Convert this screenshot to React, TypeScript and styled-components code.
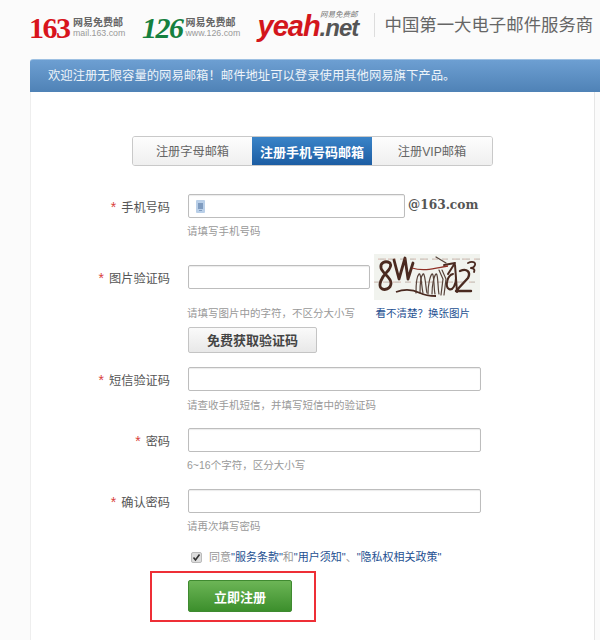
import styled, { createGlobalStyle } from 'styled-components';

const GlobalStyle = createGlobalStyle`
  html, body {
    margin: 0;
    padding: 0;
    background: #fbfbfb;
    font-family: "Liberation Sans", "Noto Sans CJK SC", sans-serif;
  }
`;

const Page = styled.div`
  width: 600px;
  height: 640px;
  overflow: hidden;
`;

const Header = styled.header`
  display: flex;
  align-items: center;
  height: 59px;
  padding: 0 0 7px 29px;
  box-sizing: border-box;
`;

const Logo = styled.div`
  display: flex;
  align-items: center;
  gap: 3px;
  margin: 3px 0 0 0;
`;

const LogoMark = styled.span<{ $color: string }>`
  flex: 0 0 41px;
  font-family: "Liberation Serif", serif;
  font-weight: 700;
  font-size: 30px;
  line-height: 30px;
  letter-spacing: -1.5px;
  color: ${(p) => p.$color};
`;

const LogoMarkItalic = styled(LogoMark)`
  font-style: italic;
  flex-basis: 40px;
`;

const LogoText = styled.div<{ $width: number }>`
  display: flex;
  flex-direction: column;
  width: ${(p) => p.$width}px;
  margin-right: 20px;
  font-size: 10px;
  line-height: 11px;
  font-weight: 700;
  color: #666;
  white-space: nowrap;
`;

const LogoDomain = styled.span`
  font-size: 8.8px;
  font-weight: 400;
  color: #999;
`;

const YeahLogo = styled.div`
  position: relative;
  display: flex;
  align-items: baseline;
  width: 98px;
  margin: 1px 18px 0 0;
  font-style: italic;
  font-weight: 700;
  font-size: 29px;
  letter-spacing: -1px;
  line-height: 22px;
  white-space: nowrap;
`;

const YeahRed = styled.span`
  color: #d3161c;
`;

const YeahDark = styled.span`
  color: #555;
  font-size: 24px;
`;

const YeahTag = styled.span`
  position: absolute;
  right: -2px;
  top: -5px;
  font-size: 7.5px;
  line-height: 9px;
  letter-spacing: 0;
  font-weight: 400;
  color: #777;
`;

const Divider = styled.div`
  width: 1px;
  height: 24px;
  background: #ddd;
  margin: 0 10px 3px 0;
`;

const Slogan = styled.div`
  font-size: 17.4px;
  color: #666;
  white-space: nowrap;
  margin-bottom: 5px;
`;

const Banner = styled.div`
  margin-left: 30px;
  height: 33px;
  display: flex;
  align-items: center;
  padding: 0 0 3px 18px;
  font-size: 12.35px;
  color: #eef4fa;
  background: linear-gradient(#6d9fd2, #4f82b6);
  border-top: 1px solid #9dc0e2;
  border-radius: 3px 0 0 0;
  box-sizing: border-box;
`;

const Card = styled.main`
  margin: 0 5px 0 30px;
  height: 548px;
  background: #fff;
  border-left: 1px solid #eee;
  border-right: 1px solid #e6e6e6;
  padding-top: 44px;
  box-sizing: border-box;
`;

const Tabs = styled.div`
  display: flex;
  width: 361px;
  height: 30px;
  margin: 0 0 28px 101px;
  border: 1px solid #c9c9c9;
  border-radius: 3px;
  box-sizing: border-box;
  overflow: hidden;
`;

const Tab = styled.div<{ $active?: boolean }>`
  flex: 1;
  display: flex;
  align-items: center;
  justify-content: center;
  font-size: ${(p) => (p.$active ? 13 : 12.2)}px;
  font-weight: ${(p) => (p.$active ? 700 : 400)};
  color: ${(p) => (p.$active ? '#fff' : '#666')};
  background: ${(p) =>
    p.$active ? 'linear-gradient(#3a84c8, #1c5da3)' : 'linear-gradient(#fdfdfd, #efefef)'};

  &:first-child {
    flex: 0 0 119px;
  }
`;

const Row = styled.div<{ $top?: number }>`
  display: grid;
  grid-template-columns: 139px auto 1fr;
  column-gap: 18px;
  align-items: center;
  height: 24px;
  margin-top: ${(p) => p.$top ?? 0}px;
`;

const Label = styled.label`
  text-align: right;
  height: 24px;
  box-sizing: border-box;
  font-size: 12.2px;
  line-height: 22px;
  padding-top: 3px;
  color: #555;
`;

const Star = styled.span`
  color: #d9413c;
  font-size: 14px;
  line-height: 14px;
  margin-right: 5px;
`;

const Input = styled.div<{ $width: number }>`
  position: relative;
  width: ${(p) => p.$width}px;
  height: 24px;
  box-sizing: border-box;
  background: #fff;
  border: 1px solid #bdbdbd;
  border-radius: 2px;
  box-shadow: inset 0 1px 1px rgba(0, 0, 0, 0.08);
`;

const PhoneMark = styled.svg`
  position: absolute;
  left: 7px;
  top: 5px;
`;

const Domain = styled.span`
  margin: 0 0 3px -15px;
  font-family: "DejaVu Serif", serif;
  font-weight: 700;
  font-size: 12.2px;
  color: #555;
`;

const Hint = styled.div<{ $top?: number }>`
  margin: ${(p) => p.$top ?? 6}px 0 0 156px;
  font-size: 10.5px;
  line-height: 14px;
  color: #999;
`;

const CaptchaRow = styled.div`
  display: flex;
  align-items: center;
  margin-top: 16px;
`;

const CaptchaLabel = styled(Label)`
  width: 139px;
  margin-right: 18px;
`;

const Captcha = styled.svg`
  display: block;
  width: 106px;
  height: 46px;
  margin-left: 4px;
  background: #f1f3ee;
`;

const HintRow = styled.div`
  display: flex;
  justify-content: space-between;
  width: 283px;
  margin: 6px 0 0 156px;
  font-size: 10.5px;
  line-height: 14px;
  color: #999;
`;

const Link = styled.a`
  color: #1d4f91;
`;

const SmsButton = styled.button`
  display: block;
  width: 129px;
  height: 26px;
  margin: 7px 0 0 157px;
  padding: 0 0 2px;
  font: inherit;
  font-size: 13px;
  font-weight: 700;
  color: #444;
  background: linear-gradient(#fafafa, #e8e8e8);
  border: 1px solid #c4c4c4;
  border-radius: 2px;
`;

const Agree = styled.div`
  display: flex;
  align-items: center;
  gap: 7px;
  margin: 17px 0 0 160px;
  font-size: 11px;
  line-height: 14px;
  color: #999;
`;

const CheckBox = styled.span`
  display: flex;
  align-items: center;
  justify-content: center;
  width: 11px;
  height: 11px;
  background: #ddd;
  border: 1px solid #bbb;
  border-radius: 2px;
  box-sizing: border-box;
`;

const Highlight = styled.div`
  width: 166px;
  height: 51px;
  margin: 7px 0 0 119px;
  padding: 7px 0 0 36px;
  box-sizing: border-box;
  border: 2px solid #ee2f36;
`;

const Submit = styled.button`
  display: block;
  width: 104px;
  height: 32px;
  padding: 0;
  font: inherit;
  font-size: 13px;
  font-weight: 700;
  color: #fff;
  background: linear-gradient(#6cb556, #3c8f2c);
  border: 1px solid #3f8a30;
  border-radius: 2px;
`;

const PhoneIcon = () => (
  <PhoneMark width="9" height="13" viewBox="0 0 9 13">
    <rect width="9" height="13" rx="1" fill="#b9cfe8" />
    <rect x="2" y="3" width="5" height="6" fill="#7f9cc0" />
    <rect x="3" y="10" width="3" height="1" fill="#7f9cc0" />
  </PhoneMark>
);

// speckle noise, fixed so the picture stays the same between runs
const specks = Array.from({ length: 70 }, (_, i) => ({
  x: (i * 37 + 11) % 106,
  y: (i * 23 + 5) % 46,
  c: i % 3 === 0 ? '#a8503f' : '#6b4a3e',
}));

const CaptchaImage = () => (
  <Captcha viewBox="0 0 106 46">
    <g fill="none" stroke="#4a2a20" strokeWidth="2.8" strokeLinecap="round" strokeLinejoin="round">
      <path d="M16 9c-5-3-10 0-9 5s10 9 10 15-7 8-10 5 1-11 5-15 6-7 4-10z" />
      <path d="M20 6l5 19 6-21 3 21 5-16" />
      <path d="M70 11l11-2-7 11" strokeWidth="2" />
      <path d="M86 17c7-3 11 1 8 7l-12 13h15" strokeWidth="2.4" />
      <path d="M94 9c4-2 8-1 7 2s-3 3-4 3 5 0 3 4" strokeWidth="1.8" />
      <path d="M79 20c-6 1-8 13-4 15s7-5 7-11l-1-13 2 27" strokeWidth="2" />
    </g>
    <g fill="none" stroke="#57433a" strokeWidth="1.2" strokeLinecap="round">
      <path d="M42 39c0-9 1-17 3-19s3 16 4 19" />
      <path d="M46 39c0-9 1-17 3-19s3 16 4 19" />
      <path d="M54 40c0-9 2-18 4-20s2 17 3 20" />
      <path d="M58 40c0-9 2-18 4-20s2 17 3 20" />
      <path d="M65 16l4 9-2 16" />
      <path d="M68 16l4 9-2 16" />
      <path d="M62 3l10 6" />
    </g>
    <path d="M38 14c12 4 24 0 36-2" fill="none" stroke="#8e2f25" strokeWidth="1.3" />
    <path d="M22 38c10-4 18-2 24 1s12 3 16 3" fill="none" stroke="#4a2a20" strokeWidth="1.8" />
    {specks.map((s, i) => (
      <circle key={i} cx={s.x} cy={s.y} r="0.5" fill={s.c} />
    ))}
  </Captcha>
);

export default function App() {
  return (
    <Page>
      <GlobalStyle />
      <Header>
        <Logo>
          <LogoMark $color="#d8141c">163</LogoMark>
          <LogoText $width={49}>
            网易免费邮
            <LogoDomain>mail.163.com</LogoDomain>
          </LogoText>
        </Logo>
        <Logo>
          <LogoMarkItalic $color="#15803f">126</LogoMarkItalic>
          <LogoText $width={52}>
            网易免费邮
            <LogoDomain>www.126.com</LogoDomain>
          </LogoText>
        </Logo>
        <YeahLogo>
          <YeahRed>yeah</YeahRed>
          <YeahDark>.net</YeahDark>
          <YeahTag>网易免费邮</YeahTag>
        </YeahLogo>
        <Divider />
        <Slogan>中国第一大电子邮件服务商</Slogan>
      </Header>
      <Banner>欢迎注册无限容量的网易邮箱！邮件地址可以登录使用其他网易旗下产品。</Banner>
      <Card>
        <Tabs>
          <Tab>注册字母邮箱</Tab>
          <Tab $active>注册手机号码邮箱</Tab>
          <Tab>注册VIP邮箱</Tab>
        </Tabs>

        <Row>
          <Label>
            <Star>*</Star>手机号码
          </Label>
          <Input $width={217}>
            <PhoneIcon />
          </Input>
          <Domain>@163.com</Domain>
        </Row>
        <Hint>请填写手机号码</Hint>

        <CaptchaRow>
          <CaptchaLabel>
            <Star>*</Star>图片验证码
          </CaptchaLabel>
          <Input $width={182} />
          <CaptchaImage />
        </CaptchaRow>
        <HintRow>
          请填写图片中的字符，不区分大小写
          <Link>看不清楚？换张图片</Link>
        </HintRow>
        <SmsButton>免费获取验证码</SmsButton>

        <Row $top={14}>
          <Label>
            <Star>*</Star>短信验证码
          </Label>
          <Input $width={293} />
        </Row>
        <Hint $top={7}>请查收手机短信，并填写短信中的验证码</Hint>

        <Row $top={16}>
          <Label>
            <Star>*</Star>密码
          </Label>
          <Input $width={293} />
        </Row>
        <Hint>6~16个字符，区分大小写</Hint>

        <Row $top={17}>
          <Label>
            <Star>*</Star>确认密码
          </Label>
          <Input $width={293} />
        </Row>
        <Hint>请再次填写密码</Hint>

        <Agree>
          <CheckBox>
            <svg width="9" height="9" viewBox="0 0 9 9">
              <path d="M1.5 4.5l2 2.5 4-5.5" fill="none" stroke="#333" strokeWidth="1.6" />
            </svg>
          </CheckBox>
          <span>
            同意<Link>"服务条款"</Link>和<Link>"用户须知"</Link>、<Link>"隐私权相关政策"</Link>
          </span>
        </Agree>
        <Highlight>
          <Submit>立即注册</Submit>
        </Highlight>
      </Card>
    </Page>
  );
}
